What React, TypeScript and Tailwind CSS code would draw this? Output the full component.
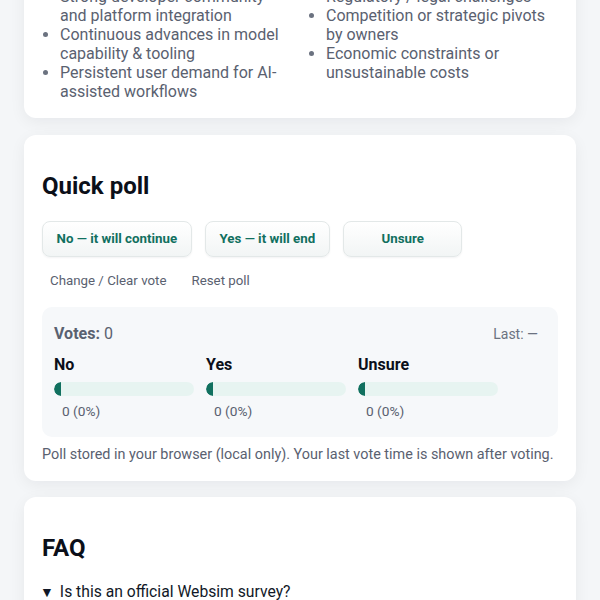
import React from "react";

const leftItems = [
  "Strong developer community and platform integration",
  "Continuous advances in model capability & tooling",
  "Persistent user demand for AI-assisted workflows",
];
const rightItems = [
  "Regulatory / legal challenges",
  "Competition or strategic pivots by owners",
  "Economic constraints or unsustainable costs",
];

function Bullets({ items }: { items: string[] }) {
  return (
    <ul className="list-disc pl-[18px] text-[16px] leading-[19px] text-[#5a6170] marker:text-[#6b7280]">
      {items.map((t) => (
        <li key={t}>{t}</li>
      ))}
    </ul>
  );
}

function PollButton({ label }: { label: string }) {
  return (
    <button className="h-[36px] min-w-[119px] rounded-[8px] border border-[#e3e8e8] bg-gradient-to-b from-white to-[#f2f5f5] px-[13.5px] text-[13.3px] font-bold text-[#11705f] shadow-[0_1px_2px_rgba(15,23,42,0.05)]">
      {label}
    </button>
  );
}

function ResultCol({ label }: { label: string }) {
  return (
    <div className="w-[140px]">
      <div className="text-[16px] font-bold leading-[20px] text-[#0b0f19]">{label}</div>
      <div className="mt-[7px] h-[14px] w-full overflow-hidden rounded-full bg-[#e7f4f1]">
        <div className="h-full w-[7px] rounded-l-full bg-[#11705f]" />
      </div>
      <div className="mt-[6px] pl-[8px] text-[13.7px] leading-[18px] text-[#5a6170]">0 (0%)</div>
    </div>
  );
}

export default function App() {
  return (
    <div
      className="min-h-screen bg-[#f4f6f8] px-[24px] pb-[24px]"
      style={{ fontFamily: "Roboto, 'Noto Sans', Arial, sans-serif" }}
    >
      <div className="-mt-[31px] flex flex-col">
        <section className="rounded-[12px] bg-white px-[18px] pb-[17px] pt-[18px] shadow-[0_4px_16px_rgba(15,23,42,0.06)]">
          <div className="grid grid-cols-2 gap-[16px]">
            <Bullets items={leftItems} />
            <Bullets items={rightItems} />
          </div>
        </section>

        <section className="mt-[17px] rounded-[12px] bg-white px-[18px] pb-[16px] pt-[18px] shadow-[0_4px_16px_rgba(15,23,42,0.06)]">
          <h2 className="mt-[18px] text-[24px] font-bold leading-[30px] text-[#0b0f19]">Quick poll</h2>
          <div className="mt-[20px] flex gap-[13.5px]">
            <PollButton label="No — it will continue" />
            <PollButton label="Yes — it will end" />
            <PollButton label="Unsure" />
          </div>
          <div className="mt-[8px] flex gap-[9px]">
            <button className="px-[8px] py-[6px] text-[13.3px] leading-[20px] text-[#5a6170]">Change / Clear vote</button>
            <button className="px-[8px] py-[6px] text-[13.3px] leading-[20px] text-[#5a6170]">Reset poll</button>
          </div>
          <div className="mt-[10px] rounded-[10px] bg-[#f6f8fa] px-[12px] pb-[17px] pt-[13px]">
            <div className="flex items-center justify-between leading-[28px]">
              <div className="text-[16px] text-[#5a6170]">
                <span className="font-bold">Votes:</span> 0
              </div>
              <div className="pr-[8px] text-[14px] text-[#6b7280]">Last: —</div>
            </div>
            <div className="mt-[7px] flex gap-[12px]">
              <ResultCol label="No" />
              <ResultCol label="Yes" />
              <ResultCol label="Unsure" />
            </div>
          </div>
          <p className="mt-[8px] text-[14.4px] leading-[20px] text-[#5a6170]">
            Poll stored in your browser (local only). Your last vote time is shown after voting.
          </p>
        </section>

        <section className="mt-[16px] rounded-[12px] bg-white px-[18px] pb-[18px] pt-[18px] shadow-[0_4px_16px_rgba(15,23,42,0.06)]">
          <h2 className="mt-[18px] text-[24px] font-bold leading-[30px] text-[#0b0f19]">FAQ</h2>
          <div className="-ml-[2px] mt-[17px] text-[15.7px] leading-[24px] text-[#111827]">
            <span className="mr-[6px] text-[14px]">▼</span>Is this an official Websim survey?
          </div>
          <div className="mt-[8px] text-[16px] leading-[22px] text-[#5a6170]">
            No. This is an independent community page.
          </div>
        </section>
      </div>
    </div>
  );
}
